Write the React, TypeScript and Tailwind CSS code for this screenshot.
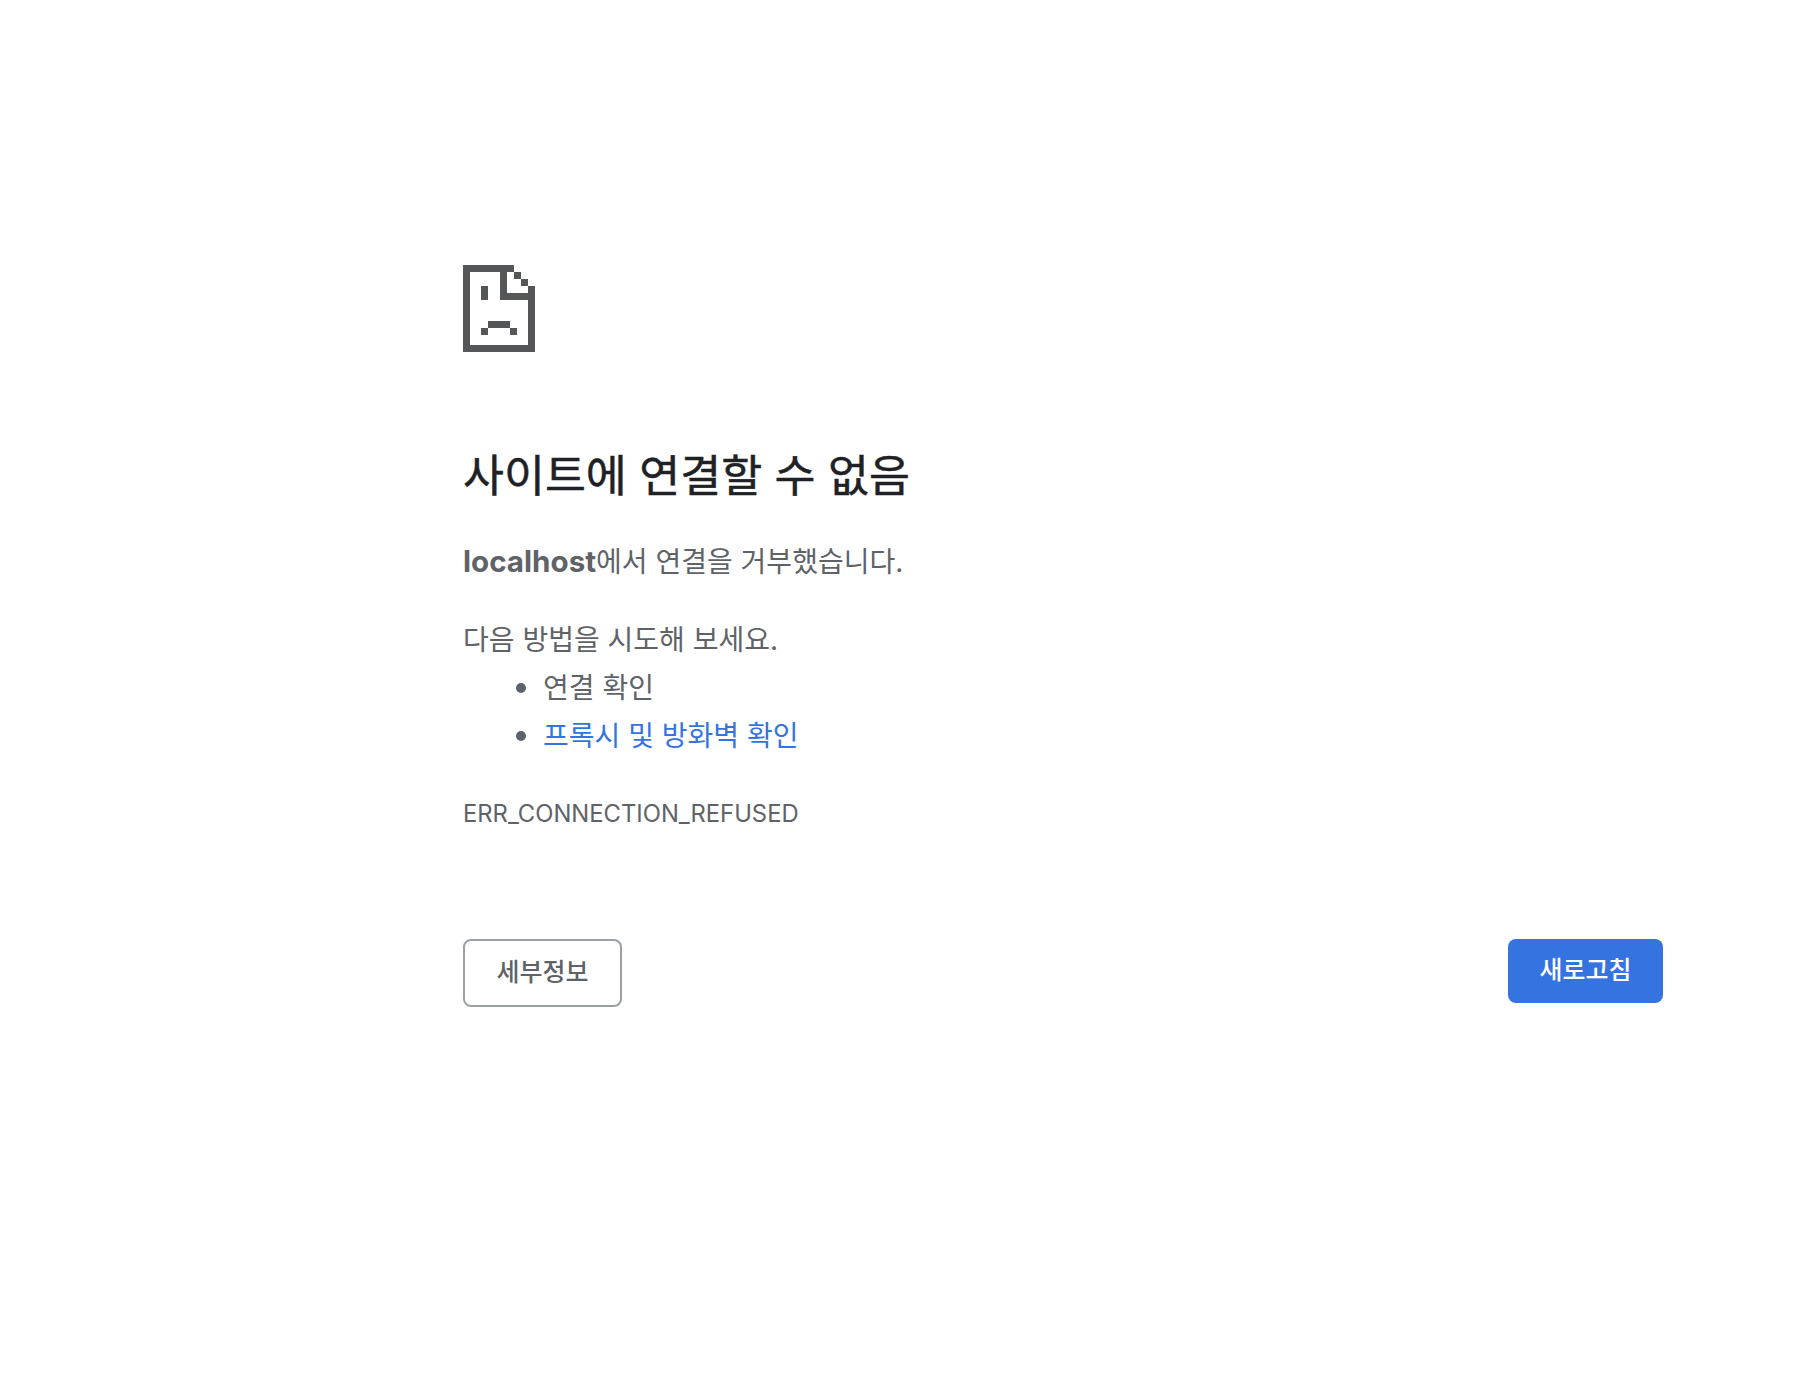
import React from "react";

function SadFile() {
  return (
    <svg width="72" height="87" viewBox="0 0 72 87" shapeRendering="crispEdges" fill="#555658" className="block">
      <rect x="0" y="0" width="51" height="7" />
      <rect x="0" y="0" width="7" height="87" />
      <rect x="0" y="80" width="72" height="7" />
      <rect x="65" y="21" width="7" height="66" />
      <rect x="37" y="7" width="7" height="28" />
      <rect x="37" y="28" width="28" height="7" />
      <rect x="51" y="7" width="7" height="7" />
      <rect x="58" y="14" width="7" height="7" />
      <rect x="18" y="21" width="7" height="14" />
      <rect x="25" y="56" width="22" height="7" />
      <rect x="18" y="63" width="7" height="7" />
      <rect x="47" y="63" width="7" height="7" />
    </svg>
  );
}

export default function App() {
  return (
    <div className="min-h-[1400px] bg-white pt-[265px] pl-[463px] font-['Inter','Noto_Sans_CJK_KR',sans-serif] text-[#5f6368]">
      <div className="w-[1204px]">
        <SadFile />
        <h1 className="mt-[98px] text-[44.5px] leading-[52px] font-normal text-[#202124] [-webkit-text-stroke:0.5px_#202124]">사이트에 연결할 수 없음</h1>
        <p className="mt-[35px] text-[28px] leading-[48px]">
          <strong className="text-[29.6px] font-bold">localhost</strong>에서 연결을 거부했습니다.
        </p>
        <p className="mt-[30px] text-[28px] leading-[48px]">다음 방법을 시도해 보세요.</p>
        <ul className="-mt-px list-disc pl-[80px] text-[28px] leading-[48px] marker:text-[31px]">
          <li className="h-[48px]">연결 확인</li>
          <li className="h-[48px]">
            <a className="text-[#3574e0]">프록시 및 방화벽 확인</a>
          </li>
        </ul>
        <div className="mt-[31px] text-[23.8px] leading-[48px]">ERR_CONNECTION_REFUSED</div>
        <div className="mt-[101px] flex items-start justify-between pr-[4px]">
          <button className="h-[68px] w-[159px] rounded-[8px] border-2 border-[#9aa0a6] bg-white text-[25px] font-medium text-[#5f6368]">세부정보</button>
          <button className="h-[64px] w-[155px] rounded-[8px] bg-[#3574e0] text-[25px] font-medium text-white">새로고침</button>
        </div>
      </div>
    </div>
  );
}
